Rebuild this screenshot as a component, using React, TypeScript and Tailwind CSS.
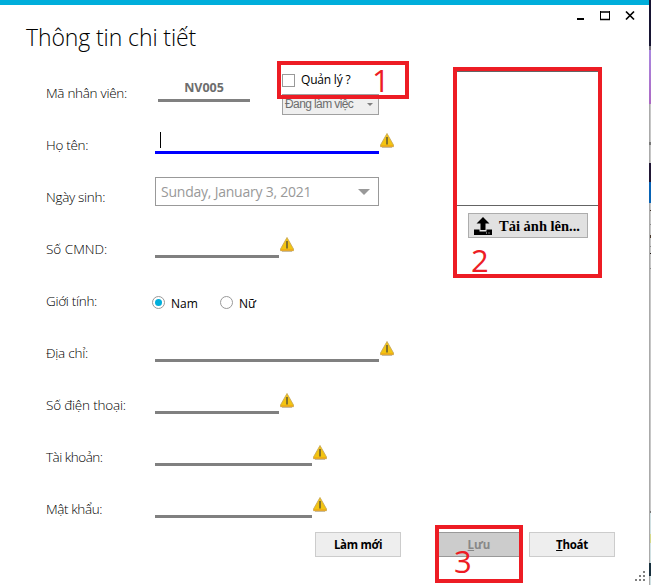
import type { ReactNode } from "react";

const label = "w-[109px] shrink-0 pt-[16px] text-[13.5px] leading-5 font-light text-black whitespace-nowrap";

function Warning() {
  return (
    <svg width="14" height="15" viewBox="0 0 14 15" className="mt-[14px] ml-px shrink-0">
      <path d="M7 .5 13.5 12v1.700H.5V12Z" fill="#f3c411" stroke="#c9a95a" strokeWidth=".9" strokeLinejoin="round" />
      <path d="M1 13h12" stroke="#eda316" strokeWidth="1.2" />
      <path d="M2 14.500h10" stroke="#bcae91" strokeWidth=".8" />
      <path d="M7 4v5M7 9v2.600" stroke="#86722a" strokeWidth="2" />
    </svg>
  );
}

function Row({ title, tracking = "tracking-[-0.3px]", children }: { title: string; tracking?: string; children?: ReactNode }) {
  return (
    <div className="flex h-[52px] items-start">
      <div className={`${label} ${tracking}`}>{title}</div>
      {children}
    </div>
  );
}

function Field({ width }: { width: string }) {
  return (
    <>
      <div className={`h-[35px] shrink-0 border-b-[3px] border-[#808080] ${width}`} />
      <Warning />
    </>
  );
}

function Button({ children, className = "" }: { children: ReactNode; className?: string }) {
  return (
    <button className={`flex h-[25px] w-[86px] items-center justify-center border pt-px text-[11.5px] leading-none font-bold ${className}`}>
      {children}
    </button>
  );
}

export default function App() {
  return (
    <div className="flex h-[585px] w-[651px] overflow-hidden bg-white font-['Open_Sans','Noto_Sans',sans-serif] text-black">
      <main className="relative flex w-[649px] shrink-0 flex-col border-t-[5px] border-[#00aedb] bg-white">
        <header className="flex h-[62px] justify-between">
          <h1 className="pt-[15px] pl-[26px] text-[23px] leading-[34px] font-light tracking-[-0.1px]">Thông tin chi tiết</h1>
          <svg width="62" height="12" viewBox="0 0 62 12" className="mt-[5px] mr-[10px]" fill="none" stroke="#000">
            <path d="M0 9h7" strokeWidth="2" />
            <path d="M23.500 1v9M32.500 1v9" strokeWidth="1" />
            <path d="M23 2h10M23 9.500h10" strokeWidth="1.6" />
            <path d="m49 1.500 8 8m0-8-8 8" strokeWidth="1.700" />
          </svg>
        </header>

        <div className="flex h-[465px]">
          <section className="w-[453px] pl-[46px]">
            <Row title="Mã nhân viên:">
              <div className="ml-[3px] h-[35px] w-[92px] border-b-[3px] border-[#808080] pt-[12px] text-center text-[12.500px] leading-[17px] font-bold text-[#6d6d6d]">
                NV005
              </div>
              <div className="ml-[32px] w-[97px] pt-[5px]">
                <label className="flex h-[22px] items-start text-[12px] leading-4 whitespace-nowrap">
                  <span className="mt-[2px] mr-[6px] size-[13px] border border-[#999]" />
                  <span className="tracking-[-0.2px]">Quản lý ?</span>
                </label>
                <div className="flex h-[21px] items-center justify-between border border-[#a0a0a0] bg-[#efefef] pr-[5px] pb-[2px] pl-[2px] font-['Liberation_Sans',sans-serif] text-[12px] leading-none tracking-[-0.6px] text-[#6d6d6d]">
                  <span className="whitespace-nowrap">Đang làm việc</span>
                  <span className="mt-px border-x-[3px] border-t-[3px] border-x-transparent border-t-[#808080]" />
                </div>
              </div>
            </Row>
            <Row title="Họ tên:">
              <div className="h-[35px] w-[224px] border-b-[3px] border-[#0000ff] pt-[13px] pl-[5px]">
                <div className="h-[16px] w-px bg-black" />
              </div>
              <Warning />
            </Row>
            <Row title="Ngày sinh:">
              <div className="mt-[6px] flex h-[29px] w-[224px] items-center justify-between border border-[#999] pr-[8px] pl-[5px] text-[14px] leading-none tracking-[-0.23px] text-[#999]">
                <span className="whitespace-nowrap">Sunday, January 3, 2021</span>
                <span className="border-x-[6px] border-t-[6px] border-x-transparent border-t-[#999]" />
              </div>
            </Row>
            <Row title="Số CMND:" tracking=""><Field width="w-[124px]" /></Row>
            <Row title="Giới tính:">
              <div className="-ml-[3px] flex pt-[21px] text-[12px] leading-[15px]">
                <label className="flex w-[68px]">
                  <span className="mr-[6px] flex size-[13px] items-center justify-center rounded-full border border-[#999]">
                    <span className="size-[7px] rounded-full bg-[#00aedb]" />
                  </span>
                  Nam
                </label>
                <label className="flex">
                  <span className="mr-[6px] size-[13px] rounded-full border border-[#999]" />
                  Nữ
                </label>
              </div>
            </Row>
            <Row title="Địa chỉ:" tracking="tracking-[-0.25px]"><Field width="w-[224px]" /></Row>
            <Row title="Số điện thoại:" tracking="tracking-[-0.2px]"><Field width="w-[124px]" /></Row>
            <Row title="Tài khoản:" tracking="tracking-[-0.5px]"><Field width="w-[157px]" /></Row>
            <Row title="Mật khẩu:" tracking="tracking-[-0.4px]"><Field width="w-[157px]" /></Row>
          </section>

          <aside className="h-[211px] w-[149px] border-4 border-[#ed1c24]">
            <div className="h-[135px] border-y border-[#646464]" />
            <button className="mt-[7px] ml-[11px] flex h-[25px] w-[120px] items-center border border-[#adadad] bg-[#e1e1e1] pl-[5px] font-['Liberation_Serif',serif] text-[14.500px] font-bold whitespace-nowrap">
              <svg width="18" height="18" viewBox="0 0 18 18" className="mr-[7px]">
                <path d="M9 0 2.500 6.500H6.500V13h5V6.500h4Z" />
                <path fillRule="evenodd" d="M0 12.500h5.500V14.500h7v-2H18V18H0ZM12 15.500v1h1v-1Zm2.500 0v1h1v-1Z" />
              </svg>
              <span className="pt-[3px]">Tải ảnh lên...</span>
            </button>
            <div className="mt-[4px] ml-[14px] text-[31px] leading-[36px] text-[#ed1c24]">2</div>
          </aside>
        </div>

        <footer className="flex pl-[315px]">
          <Button className="border-[#ccc] bg-[#eee] tracking-[-0.3px]">Làm mới</Button>
          <Button className="ml-[35px] border-[#999] bg-[#ccc] text-[#888]"><span><u>L</u>ưu</span></Button>
          <Button className="ml-[7px] border-[#ccc] bg-[#eee] tracking-[-0.3px]"><span><u>T</u>hoát</span></Button>
        </footer>

        <svg width="10" height="10" viewBox="0 0 10 10" className="absolute right-[4px] bottom-[4px]" fill="#808080">
          <path d="M8 0h2v2H8ZM4 4h2v2H4ZM8 4h2v2H8ZM0 8h2v2H0ZM4 8h2v2H4ZM8 8h2v2H8Z" />
        </svg>

        {/* Numbered callouts laid over the form */}
        <div className="absolute top-[56px] left-[277px] h-[38px] w-[132px] border-4 border-[#ed1c24]">
          <span className="absolute top-[-3px] left-[91px] text-[31px] leading-[36px] text-[#ed1c24]">1</span>
        </div>
        <div className="absolute top-[520px] left-[435px] h-[58px] w-[88px] border-4 border-[#ed1c24]">
          <span className="absolute top-[14px] left-[15px] text-[31px] leading-[36px] text-[#ed1c24]">3</span>
        </div>
      </main>

      <div className="flex w-[2px] flex-col border-l border-[#aaa] bg-[#c6c6c6]">
        <div className="-ml-px h-[46px] bg-[#171433]" />
        <div className="-ml-px h-[4px] bg-[#77737c]" />
        <div className="-ml-px h-[54px] bg-linear-to-b from-[#a987df] to-[#ac68c4]" />
        <div className="h-[38px]" />
        <div className="-ml-px h-[3px] bg-[#777]" />
        <div className="h-[18px]" />
        <div className="-ml-px h-[19px] bg-[#211735]" />
        <div className="-ml-px h-[21px] bg-[#0863b5]" />
        <div className="mt-[7px] h-px bg-[#3a2b20]" />
        <div className="mt-[13px] h-px bg-[#888]" />
        <div className="mt-[10px] h-[3px] bg-[#49372a]" />
        <div className="mt-[8px] h-px bg-[#888]" />
        <div className="mt-[6px] h-px bg-[#1a1410]" />
        <div className="mt-[14px] h-px bg-[#888]" />
        <div className="mt-[242px] h-[2px] bg-[#777]" />
        <div className="h-[21px] bg-[#cfe0e2]" />
        <div className="h-[9px] bg-[#d5d98a]" />
        <div className="h-[20px] bg-[#cfe0e2]" />
        <div className="-ml-px h-[13px] bg-[#18303e]" />
        <div className="flex-1 bg-[#cfe0e2]" />
      </div>
    </div>
  );
}
